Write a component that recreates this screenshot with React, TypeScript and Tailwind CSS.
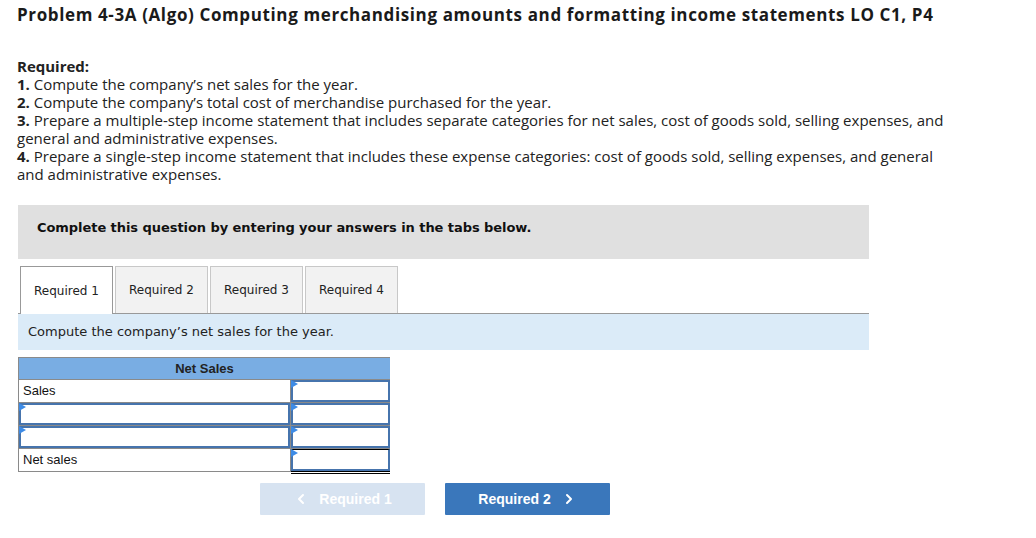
import React from "react";
import { ChevronLeft, ChevronRight } from "lucide-react";

function Marker() {
  return (
    <svg className="absolute left-0 top-0 z-10" width="7" height="8" viewBox="0 0 7 8">
      <polygon points="0,0 7,4 0,8" fill="#3d8be6" />
    </svg>
  );
}

function InputCell({ total = false }: { total?: boolean }) {
  return (
    <div className="relative bg-white h-full">
      <div
        className={
          total
            ? "absolute inset-0 border-2 border-[#4674ad] border-t-black border-t-[1px]"
            : "absolute inset-0 border-2 border-[#4674ad]"
        }
      />
      {total && (
        <div className="absolute left-0 right-0 -bottom-[3px] h-[3px] border-t border-b border-black" />
      )}
      <Marker />
    </div>
  );
}

export default function App() {
  const body = "font-['Open_Sans',sans-serif] text-[15px] leading-[18px] text-[#222]";
  return (
    <div className="w-[1036px] h-[538px] bg-white overflow-hidden">
      <div className="pl-[17px] pt-[4px]">
        <h1 className="font-['Open_Sans',sans-serif] font-bold text-[17px] tracking-[0.62px] leading-[22px] text-[#1a1a1a]">
          Problem 4-3A (Algo) Computing merchandising amounts and formatting income statements LO C1, P4
        </h1>
        <div className={`${body} mt-[31px]`}>
          <div className="font-bold">Required:</div>
          <div>
            <b>1.</b> Compute the company’s net sales for the year.
          </div>
          <div>
            <b>2.</b> Compute the company’s total cost of merchandise purchased for the year.
          </div>
          <div>
            <b>3.</b> Prepare a multiple-step income statement that includes separate categories for net sales, cost of goods sold, selling expenses, and
          </div>
          <div>general and administrative expenses.</div>
          <div>
            <b>4.</b> Prepare a single-step income statement that includes these expense categories: cost of goods sold, selling expenses, and general
          </div>
          <div>and administrative expenses.</div>
        </div>
      </div>

      <div className="ml-[18px] w-[851px]">
        <div className="mt-[22px] h-[54px] bg-[#e0e0e0] flex items-center pl-[19px] pb-[9px]">
          <span className="font-['DejaVu_Sans',Verdana,sans-serif] font-bold text-[13px] tracking-[-0.06px] text-[#111]">
            Complete this question by entering your answers in the tabs below.
          </span>
        </div>

        <div className="mt-[7px] flex gap-[2px] pl-[2px] h-[47px] relative z-10">
          {["Required 1", "Required 2", "Required 3", "Required 4"].map((t, i) => (
            <div
              key={t}
              className={
                i === 0
                  ? "w-[93px] h-[48px] bg-white border border-[#999] border-b-0 flex items-center justify-center font-['DejaVu_Sans',Verdana,sans-serif] text-[12px] text-[#222]"
                  : "w-[93px] h-[47px] bg-[#f2f2f2] border border-[#c8c8c8] border-b-0 flex items-center justify-center font-['DejaVu_Sans',Verdana,sans-serif] text-[12px] text-[#222]"
              }
            >
              {t}
            </div>
          ))}
        </div>
        <div className="h-[37px] bg-[#dbebf8] border-t border-[#999] flex items-center pl-[10px]">
          <span className="font-['DejaVu_Sans',Verdana,sans-serif] text-[13px] text-[#222]">
            Compute the company’s net sales for the year.
          </span>
        </div>

        <div className="mt-[7px] w-[372px] border border-[#8a8a8a] bg-[#8a8a8a] grid grid-cols-[271px_99px] gap-[1px] font-['Liberation_Sans',Arial,sans-serif] text-[13px] text-[#111]">
          <div className="col-span-2 h-[21px] bg-[#79ade3] flex items-center justify-center font-bold text-[#222]">
            Net Sales
          </div>
          <div className="h-[22px] bg-white flex items-center pl-[4px]">Sales</div>
          <InputCell />
          <div className="h-[22px]">
            <InputCell />
          </div>
          <InputCell />
          <div className="h-[22px]">
            <InputCell />
          </div>
          <InputCell />
          <div className="h-[22px] bg-white flex items-center pl-[4px]">Net sales</div>
          <InputCell total />
        </div>

        <div className="mt-[11px] flex gap-[20px] pl-[242px]">
          <div className="w-[165px] h-[32px] bg-[#d7e3f1] rounded-[1px] flex items-center justify-center gap-[10px] font-['Liberation_Sans',Arial,sans-serif] font-bold text-[14px] text-white">
            <ChevronLeft size={16} strokeWidth={3} />
            <span>Required 1</span>
          </div>
          <div className="w-[165px] h-[32px] bg-[#3a77bb] rounded-[1px] flex items-center justify-center gap-[10px] font-['Liberation_Sans',Arial,sans-serif] font-bold text-[14px] text-white">
            <span>Required 2</span>
            <ChevronRight size={16} strokeWidth={3} />
          </div>
        </div>
      </div>
    </div>
  );
}
